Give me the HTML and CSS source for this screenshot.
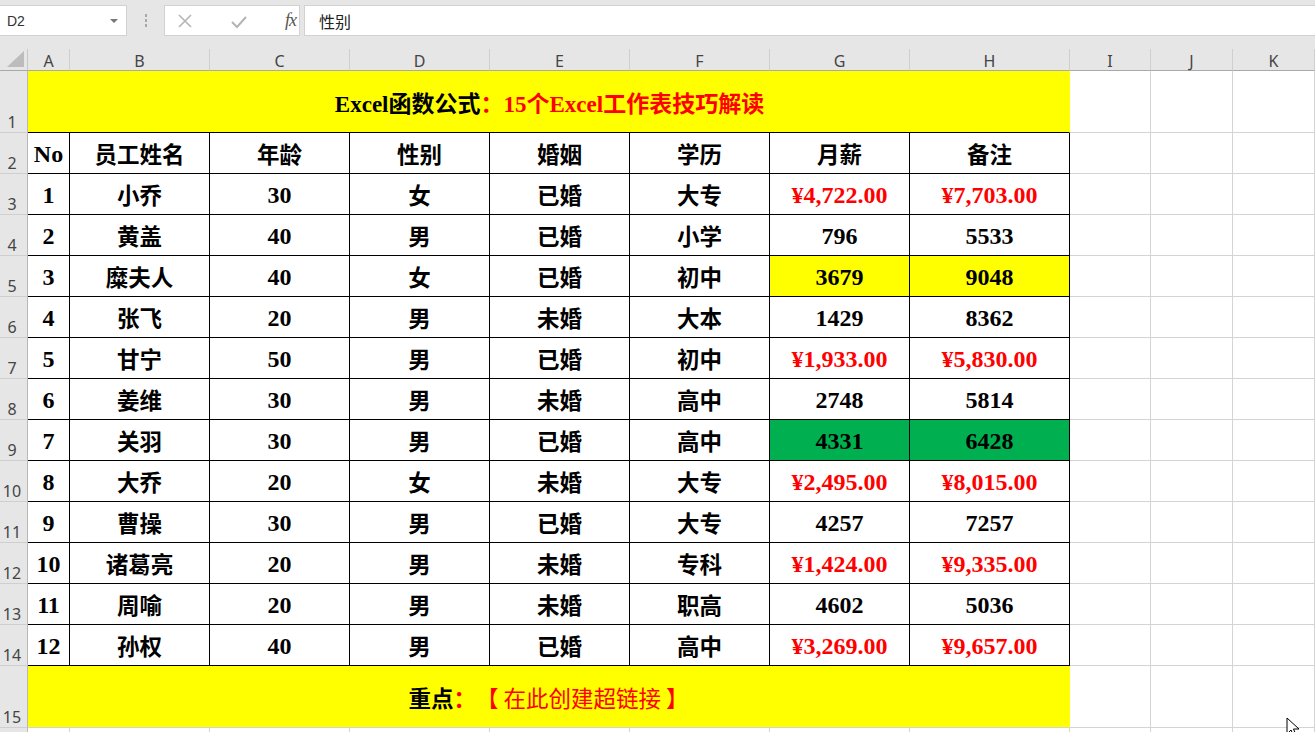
FILE: index.html
```html
<!DOCTYPE html>
<html lang="zh">
<head>
<meta charset="utf-8">
<title>Excel</title>
<link rel="stylesheet" href="styles.css">
</head>
<body>
<div class="app">
  <div class="toolbar">
    <div class="namebox"><span class="nb-text">D2</span><svg class="caret" width="8" height="5" viewBox="0 0 8 5"><path d="M0 0 L8 0 L4 4 Z" fill="#777"/></svg></div>
    <div class="grip"><i></i><i></i><i></i></div>
    <div class="fbtns">
      <svg class="fb-x" width="16" height="16" viewBox="0 0 16 16"><path d="M2 2 L14 14 M14 2 L2 14" stroke="#b4b4b4" stroke-width="1.6" fill="none"/></svg>
      <svg class="fb-ok" width="18" height="16" viewBox="0 0 18 16"><path d="M2 8 L7 13 L16 3" stroke="#b4b4b4" stroke-width="2" fill="none"/></svg>
      <span class="fx">fx</span>
    </div>
    <div class="finput">性别</div>
  </div>

  <div class="sheet">
    <div class="corner"><svg width="17" height="16" viewBox="0 0 17 16"><path d="M17 0 L17 16 L0 16 Z" fill="#bcbcbc"/></svg></div>
    <div class="ch">A</div><div class="ch">B</div><div class="ch">C</div><div class="ch">D</div><div class="ch">E</div><div class="ch">F</div><div class="ch">G</div><div class="ch">H</div><div class="ch">I</div><div class="ch">J</div><div class="ch">K</div>

    <div class="rh">1</div>
    <div class="c title"><span class="k">Excel函数公式</span><span class="r">：15个Excel工作表技巧解读</span></div>
    <div class="c"></div><div class="c"></div><div class="c"></div>

    <div class="rh">2</div>
    <div class="c t n">No</div><div class="c t">员工姓名</div><div class="c t">年龄</div><div class="c t">性别</div><div class="c t">婚姻</div><div class="c t">学历</div><div class="c t">月薪</div><div class="c t">备注</div>
    <div class="c"></div><div class="c"></div><div class="c"></div>

    <div class="rh">3</div>
    <div class="c t n">1</div><div class="c t">小乔</div><div class="c t n">30</div><div class="c t">女</div><div class="c t">已婚</div><div class="c t">大专</div><div class="c t n r">¥4,722.00</div><div class="c t n r">¥7,703.00</div>
    <div class="c"></div><div class="c"></div><div class="c"></div>

    <div class="rh">4</div>
    <div class="c t n">2</div><div class="c t">黄盖</div><div class="c t n">40</div><div class="c t">男</div><div class="c t">已婚</div><div class="c t">小学</div><div class="c t n">796</div><div class="c t n">5533</div>
    <div class="c"></div><div class="c"></div><div class="c"></div>

    <div class="rh">5</div>
    <div class="c t n">3</div><div class="c t">糜夫人</div><div class="c t n">40</div><div class="c t">女</div><div class="c t">已婚</div><div class="c t">初中</div><div class="c t n y">3679</div><div class="c t n y">9048</div>
    <div class="c"></div><div class="c"></div><div class="c"></div>

    <div class="rh">6</div>
    <div class="c t n">4</div><div class="c t">张飞</div><div class="c t n">20</div><div class="c t">男</div><div class="c t">未婚</div><div class="c t">大本</div><div class="c t n">1429</div><div class="c t n">8362</div>
    <div class="c"></div><div class="c"></div><div class="c"></div>

    <div class="rh">7</div>
    <div class="c t n">5</div><div class="c t">甘宁</div><div class="c t n">50</div><div class="c t">男</div><div class="c t">已婚</div><div class="c t">初中</div><div class="c t n r">¥1,933.00</div><div class="c t n r">¥5,830.00</div>
    <div class="c"></div><div class="c"></div><div class="c"></div>

    <div class="rh">8</div>
    <div class="c t n">6</div><div class="c t">姜维</div><div class="c t n">30</div><div class="c t">男</div><div class="c t">未婚</div><div class="c t">高中</div><div class="c t n">2748</div><div class="c t n">5814</div>
    <div class="c"></div><div class="c"></div><div class="c"></div>

    <div class="rh">9</div>
    <div class="c t n">7</div><div class="c t">关羽</div><div class="c t n">30</div><div class="c t">男</div><div class="c t">已婚</div><div class="c t">高中</div><div class="c t n g">4331</div><div class="c t n g">6428</div>
    <div class="c"></div><div class="c"></div><div class="c"></div>

    <div class="rh">10</div>
    <div class="c t n">8</div><div class="c t">大乔</div><div class="c t n">20</div><div class="c t">女</div><div class="c t">未婚</div><div class="c t">大专</div><div class="c t n r">¥2,495.00</div><div class="c t n r">¥8,015.00</div>
    <div class="c"></div><div class="c"></div><div class="c"></div>

    <div class="rh">11</div>
    <div class="c t n">9</div><div class="c t">曹操</div><div class="c t n">30</div><div class="c t">男</div><div class="c t">已婚</div><div class="c t">大专</div><div class="c t n">4257</div><div class="c t n">7257</div>
    <div class="c"></div><div class="c"></div><div class="c"></div>

    <div class="rh">12</div>
    <div class="c t n">10</div><div class="c t">诸葛亮</div><div class="c t n">20</div><div class="c t">男</div><div class="c t">未婚</div><div class="c t">专科</div><div class="c t n r">¥1,424.00</div><div class="c t n r">¥9,335.00</div>
    <div class="c"></div><div class="c"></div><div class="c"></div>

    <div class="rh">13</div>
    <div class="c t n">11</div><div class="c t">周喻</div><div class="c t n">20</div><div class="c t">男</div><div class="c t">未婚</div><div class="c t">职高</div><div class="c t n">4602</div><div class="c t n">5036</div>
    <div class="c"></div><div class="c"></div><div class="c"></div>

    <div class="rh">14</div>
    <div class="c t n">12</div><div class="c t">孙权</div><div class="c t n">40</div><div class="c t">男</div><div class="c t">已婚</div><div class="c t">高中</div><div class="c t n r">¥3,269.00</div><div class="c t n r">¥9,657.00</div>
    <div class="c"></div><div class="c"></div><div class="c"></div>

    <div class="rh">15</div>
    <div class="c foot"><span class="k">重点</span><span class="r">：</span><span class="link">【 在此创建超链接 】</span></div>
    <div class="c"></div><div class="c"></div><div class="c"></div>

    <div class="rh"></div>
    <div class="c"></div><div class="c"></div><div class="c"></div><div class="c"></div><div class="c"></div><div class="c"></div><div class="c"></div><div class="c"></div><div class="c"></div><div class="c"></div><div class="c"></div>
  </div>

  <svg class="cursor" width="14" height="22" viewBox="0 0 14 22"><path d="M1 1 L1 17 L5 13 L8 20 L10.5 19 L7.5 12 L13 12 Z" fill="#fff" stroke="#000" stroke-width="1"/></svg>
</div>
</body>
</html>
```

FILE: styles.css
```css
* { box-sizing: border-box; }
html, body { margin: 0; padding: 0; }
body {
  width: 1315px;
  height: 732px;
  overflow: hidden;
  background: #fff;
  font-family: "Liberation Sans", "Noto Sans CJK SC", sans-serif;
}
.app {
  position: relative;
  width: 1315px;
  height: 732px;
  overflow: hidden;
}

/* toolbar / formula bar */
.toolbar {
  height: 49px;
  background: #e6e6e6;
  display: flex;
  align-items: flex-start;
  padding-top: 5px;
}
.namebox {
  width: 127px;
  height: 31px;
  background: #fff;
  border: 1px solid #d2d2d2;
  border-left: none;
  display: flex;
  align-items: center;
  justify-content: space-between;
  padding: 0 8px 0 7px;
}
.nb-text {
  font-family: "Liberation Sans", "Noto Sans", sans-serif;
  font-size: 14px;
  color: #333;
}
.caret { margin-top: 1px; }
.grip {
  width: 37px;
  height: 31px;
  display: flex;
  flex-direction: column;
  align-items: center;
  justify-content: center;
  gap: 2px;
}
.grip i {
  display: block;
  width: 2px;
  height: 3px;
  background: #a8a8a8;
}
.fbtns {
  width: 136px;
  height: 31px;
  background: #fff;
  border: 1px solid #d2d2d2;
  display: flex;
  align-items: center;
  padding: 0 0 0 12px;
}
.fb-x { margin-right: 37px; }
.fb-ok { margin-right: 37px; margin-top: 2px; }
.fx {
  font-family: "Liberation Serif", serif;
  font-style: italic;
  font-size: 18px;
  color: #555;
  letter-spacing: -1px;
}
.finput {
  flex: 1;
  height: 31px;
  margin-left: 4px;
  background: #fff;
  border: 1px solid #d2d2d2;
  border-right: none;
  font-family: "Noto Sans CJK SC", sans-serif;
  font-size: 16px;
  color: #222;
  display: flex;
  align-items: center;
  padding-left: 14px;
}

/* sheet grid */
.sheet {
  display: grid;
  grid-template-columns: 28px 42px 140px 140px 140px 140px 140px 140px 160px 81px 82px 82px;
  grid-template-rows: 22px 62px repeat(13, 41px) 62px 41px;
}
.corner {
  background: #e6e6e6;
  border-right: 1px solid #c6c6c6;
  border-bottom: 1px solid #a9a9a9;
  display: flex;
  align-items: flex-end;
  justify-content: flex-end;
  padding: 0 3px 3px 0;
}
.corner svg { display: block; }
.ch {
  background: #e6e6e6;
  border-right: 1px solid #cfcfcf;
  border-bottom: 1px solid #a9a9a9;
  color: #444;
  font-family: "Noto Sans", "Liberation Sans", sans-serif;
  font-size: 16px;
  display: flex;
  align-items: center;
  justify-content: center;
  padding-top: 2px;
}
.rh {
  background: #e6e6e6;
  border-right: 1px solid #b8b8b8;
  border-bottom: 1px solid #cfcfcf;
  color: #444;
  font-family: "Noto Sans", "Liberation Sans", sans-serif;
  font-size: 16px;
  line-height: 1;
  display: flex;
  align-items: flex-end;
  justify-content: center;
  padding: 0 3px 2px 0;
}
.c {
  border-right: 1px solid #d4d4d4;
  border-bottom: 1px solid #d4d4d4;
  display: flex;
  align-items: center;
  justify-content: center;
  font-family: "Liberation Serif", "Noto Sans CJK SC", serif;
  font-weight: bold;
  font-size: 22.5px;
  color: #000;
  white-space: nowrap;
}
.t {
  border-right-color: #000;
  border-bottom-color: #000;
}
.n {
  font-size: 24px;
  padding-top: 2px;
}
.r { color: #ff0000; }
.y { background: #ffff00; }
.g { background: #00b050; }

.title {
  grid-column: span 8;
  background: #ffff00;
  border-right-color: #ffff00;
  border-bottom-color: #000;
  font-size: 23px;
  padding-left: 2px;
}
.foot {
  grid-column: span 8;
  background: #ffff00;
  border-right-color: #ffff00;
  font-size: 22.5px;
  padding-left: 0;
}
.foot .link {
  color: #ff0000;
  font-weight: normal;
  font-family: "Noto Sans CJK SC", serif;
}
.k { color: #000; }

.cursor {
  position: absolute;
  left: 1286px;
  top: 717px;
}
```
